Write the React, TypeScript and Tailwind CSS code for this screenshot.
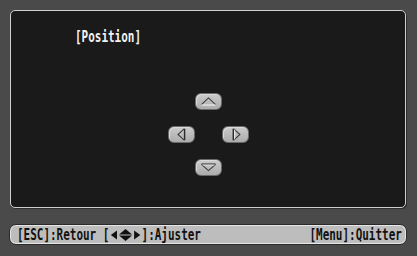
import React from "react";

const mono = { fontFamily: '"DejaVu Sans Mono", "Liberation Mono", monospace' };

function Btn({ dir }: { dir: "up" | "down" | "left" | "right" }) {
  let shape: React.ReactNode = null;
  if (dir === "up")
    shape = (
      <>
        <polyline points="5,12 13,4.5 21,12" fill="none" stroke="#3a3a3a" strokeWidth="1.2" />
        <line x1="5" y1="12.5" x2="21" y2="12.5" stroke="#f4f4f4" strokeWidth="1.2" />
      </>
    );
  if (dir === "down")
    shape = (
      <>
        <polyline points="5,5 13,12 21,5" fill="none" stroke="#3a3a3a" strokeWidth="1.2" />
        <line x1="5" y1="4.5" x2="21" y2="4.5" stroke="#3a3a3a" strokeWidth="1.2" />
        <line x1="6" y1="5.8" x2="20" y2="5.8" stroke="#e8e8e8" strokeWidth="0.8" />
      </>
    );
  if (dir === "left")
    shape = (
      <>
        <polyline points="16,2 9,8.5 16,15" fill="none" stroke="#3a3a3a" strokeWidth="1.2" />
        <line x1="16.5" y1="2" x2="16.5" y2="15" stroke="#2a2a2a" strokeWidth="1.6" />
      </>
    );
  if (dir === "right")
    shape = (
      <>
        <polyline points="11,2 18,8.5 11,15" fill="none" stroke="#3a3a3a" strokeWidth="1.2" />
        <line x1="10.5" y1="2" x2="10.5" y2="15" stroke="#2a2a2a" strokeWidth="1.6" />
        <line x1="12" y1="3" x2="12" y2="14" stroke="#f4f4f4" strokeWidth="1" />
      </>
    );
  return (
    <div className="w-[27px] h-[17px] rounded-[6px] border border-[#6a6a6a] bg-gradient-to-b from-[#cbcbcb] to-[#acacac] shadow-[inset_1px_1px_0_#dadada]">
      <svg width="25" height="15" viewBox="0 0 26 17" className="block">
        {shape}
      </svg>
    </div>
  );
}

function ArrowsIcon() {
  return (
    <svg width="47" height="12" viewBox="0 0 47 12" className="inline-block align-[-1px]">
      <polygon points="11,1.5 2,6 11,10.5" fill="#111" />
      <polygon points="23.5,0 14,5.5 33,5.5" fill="#111" />
      <polygon points="23.5,12 14,6.5 33,6.5" fill="#111" />
      <polygon points="36,1.5 45,6 36,10.5" fill="#111" />
    </svg>
  );
}

export default function App() {
  return (
    <div className="w-[417px] h-[256px] bg-[#4a4a4a] overflow-hidden relative" style={mono}>
      <div className="ml-[10px] mt-[10px] w-[396px] h-[198px] rounded-[5px] border-[1.5px] border-[#cfcfcf] bg-[#1a1a1a] shadow-[1px_1px_0_#2e2e2e]">
        <div className="pl-[64px] pt-[18px] h-[33px] font-bold text-[16px] leading-[15px] text-[#f2f2f2] whitespace-nowrap">
          <span className="inline-block origin-left scale-x-[0.685]">[Position]</span>
        </div>
        <div className="mt-[49px] grid grid-cols-[27px_27px_27px] grid-rows-[17px_17px_17px] gap-y-[16px] justify-center">
          <div />
          <Btn dir="up" />
          <div />
          <Btn dir="left" />
          <div />
          <Btn dir="right" />
          <div />
          <Btn dir="down" />
          <div />
        </div>
      </div>
      <div className="ml-[9px] mt-[16px] w-[398px] h-[21px] rounded-[7px] border border-[#2a2a2a] bg-[#bdbdbd] shadow-[inset_0_0_0_1px_#e6e6e6] flex items-center justify-between pl-[7px] pr-[4px] font-bold text-[16px] leading-[15px] text-[#111] whitespace-nowrap">
        <div className="w-[190px] flex justify-start">
          <span className="shrink-0 inline-block origin-left scale-x-[0.685]">
            [ESC]:Retour [<ArrowsIcon />]:Ajuster
          </span>
        </div>
        <div className="w-[96px] flex justify-end">
          <span className="shrink-0 inline-block origin-right scale-x-[0.685]">[Menu]:Quitter</span>
        </div>
      </div>
    </div>
  );
}
